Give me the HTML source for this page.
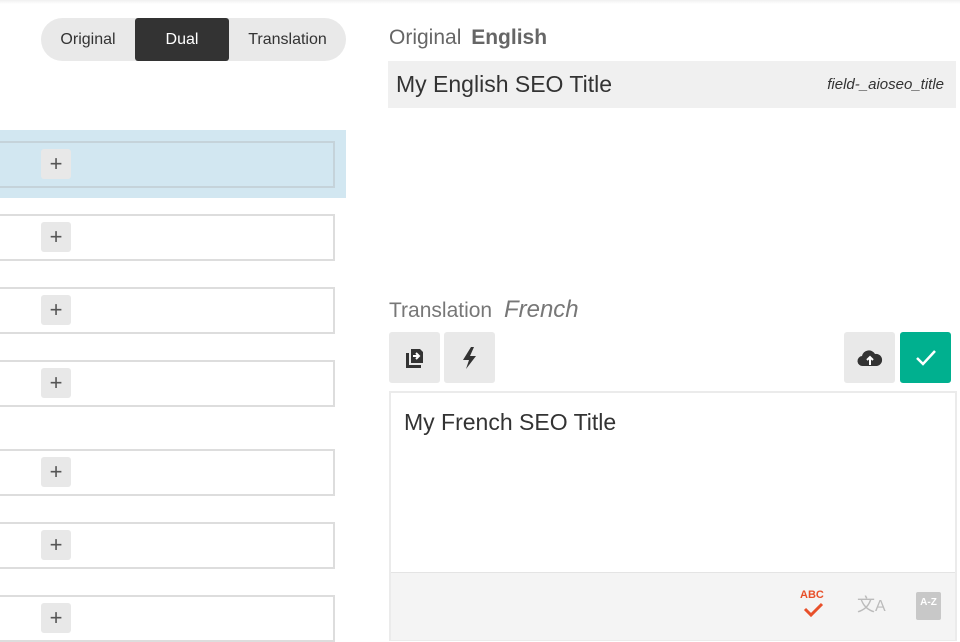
<!DOCTYPE html>
<html><head><style>
*{box-sizing:border-box;margin:0;padding:0}
body{width:960px;height:640px;overflow:hidden;background:#fff;font-family:"Liberation Sans",sans-serif;position:relative}
.a{position:absolute}
.pill{left:41px;top:18px;width:305px;height:43px;border-radius:22px;background:#e9e9e9}
.pill span{position:absolute;top:0;height:43px;line-height:43px;font-size:16px;color:#333;text-align:center}
.row{left:-2px;width:337px;height:47px;border:2px solid #ddd;background:#fff}
.plus{left:41px;width:30px;height:30px;background:#e8e8e8;border-radius:3px;color:#555;font-size:22px;line-height:29px;text-align:center}
.btn{top:332px;width:51px;height:51px;background:#e9e9e9;border-radius:3px;display:flex;align-items:center;justify-content:center}
</style></head><body>
<div class="a" style="left:0;top:0;width:960px;height:4px;background:linear-gradient(#f0f0f0,#fff)"></div>
<div class="a pill"><span style="left:0;width:94px">Original</span><span style="left:94px;width:94px;background:#333;color:#fff;border-radius:3px">Dual</span><span style="left:188px;width:117px">Translation</span></div>

<div class="a" style="left:0;top:130px;width:346px;height:68px;background:#d2e7f1"></div>
<div class="a row" style="top:141px;background:#d2e7f1;border-color:#c5d3da"></div>
<div class="a plus" style="top:149px">+</div>
<div class="a row" style="top:214px"></div><div class="a plus" style="top:222px">+</div>
<div class="a row" style="top:287px"></div><div class="a plus" style="top:295px">+</div>
<div class="a row" style="top:360px"></div><div class="a plus" style="top:368px">+</div>
<div class="a row" style="top:449px"></div><div class="a plus" style="top:457px">+</div>
<div class="a row" style="top:522px"></div><div class="a plus" style="top:530px">+</div>
<div class="a row" style="top:595px"></div><div class="a plus" style="top:603px">+</div>

<div class="a" style="left:389px;top:26px;font-size:21px;color:#666">Original <b style="margin-left:4px">English</b></div>
<div class="a" style="left:388px;top:61px;width:568px;height:47px;background:#f0f0f0"></div>
<div class="a" style="left:396px;top:71px;font-size:23px;color:#333">My English SEO Title</div>
<div class="a" style="right:16px;top:76px;font-size:15px;font-style:italic;color:#333">field-_aioseo_title</div>

<div class="a" style="left:389px;top:296px;font-size:21px;color:#777">Translation <i style="margin-left:6px;font-size:24px">French</i></div>
<div class="a btn" style="left:389px"><svg width="22" height="22" viewBox="0 0 22 22"><path d="M2 6h3v12h12v3H2z" fill="#333"/><path d="M7 2h9l3 3v11H7z" fill="#333"/><path d="M9 9h6M12 6l3 3-3 3" stroke="#fff" stroke-width="2" fill="none"/></svg></div>
<div class="a btn" style="left:444px"><svg width="20" height="24" viewBox="0 0 20 24"><path d="M11 1L3 14h6l-3 9 10-13h-6l4-9z" fill="#333"/></svg></div>
<div class="a btn" style="left:844px"><svg width="26" height="20" viewBox="0 0 26 20"><path d="M6 18a5 5 0 0 1-1-10 7 7 0 0 1 13-2 6 6 0 0 1 2 12z" fill="#333"/><path d="M13 17v-7M10 12l3-3 3 3" stroke="#fff" stroke-width="2" fill="none"/></svg></div>
<div class="a btn" style="left:900px;background:#00b08f"><svg width="22" height="18" viewBox="0 0 22 18"><path d="M2 9l6 6L20 2" stroke="#fff" stroke-width="2.5" fill="none"/></svg></div>

<div class="a" style="left:389px;top:391px;width:568px;height:250px;border:2px solid #ebebeb;background:#fff"></div>
<div class="a" style="left:404px;top:409px;font-size:23px;color:#333">My French SEO Title</div>
<div class="a" style="left:391px;top:572px;width:564px;height:68px;background:#f4f4f4;border-top:1px solid #e4e4e4"></div>
<div class="a" style="left:800px;top:589px;font-size:11px;font-weight:bold;color:#e8502a">ABC</div>
<svg class="a" style="left:803px;top:602px" width="22" height="16" viewBox="0 0 22 16"><path d="M2 7l6 6L19 2" stroke="#e8502a" stroke-width="3" fill="none"/></svg>
<div class="a" style="left:857px;top:591px;font-size:18px;color:#bbb">文<span style="font-size:16px">A</span></div>
<div class="a" style="left:916px;top:592px;width:25px;height:28px;background:#c8c8c8;border-radius:2px;color:#fff;font-size:10px;font-weight:bold;text-align:center;line-height:22px">A-Z</div>
</body></html>
